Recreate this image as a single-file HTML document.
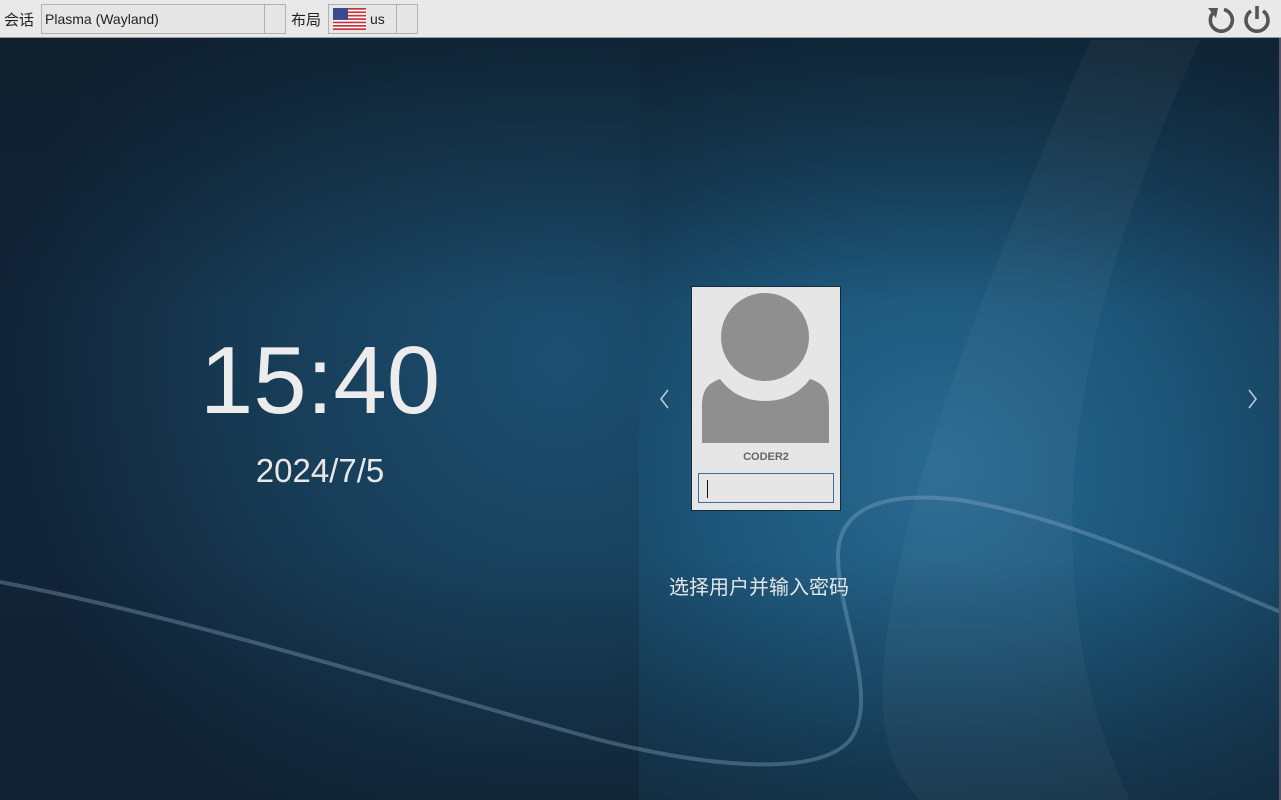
<!DOCTYPE html>
<html><head><meta charset="utf-8"><style>
*{margin:0;padding:0;box-sizing:border-box}
html,body{width:1281px;height:800px;overflow:hidden;background:#153049;font-family:"Liberation Sans","Noto Sans CJK SC",sans-serif}
.abs{position:absolute}
#bar{left:0;top:0;width:1281px;height:38px;background:#e9e9e9;border-bottom:1px solid #9a9a9a}
.lbl{font-size:15px;color:#222;top:9px}
.combo{top:4px;height:30px;border:1px solid #b2b2b2;background:#e6e6e6;font-size:14px;color:#222}
.div{position:absolute;top:0;bottom:0;width:1px;background:#b2b2b2}
</style></head><body>
<svg class="abs" style="left:0;top:38px" width="1281" height="762" viewBox="0 38 1281 762">
<defs>
<radialGradient id="rg" cx="940" cy="470" r="520" gradientUnits="userSpaceOnUse">
<stop offset="0" stop-color="#2a6a92"/><stop offset="0.45" stop-color="#1c5578"/><stop offset="1" stop-color="#14334c"/>
</radialGradient>
<radialGradient id="lg" cx="560" cy="360" r="560" gradientUnits="userSpaceOnUse">
<stop offset="0" stop-color="#1c5072"/><stop offset="0.55" stop-color="#173b55"/><stop offset="1" stop-color="#112336"/>
</radialGradient>
<linearGradient id="top" x1="0" y1="0" x2="0" y2="1">
<stop offset="0" stop-color="#0d1d2a" stop-opacity="0.7"/><stop offset="0.35" stop-color="#0d1d2a" stop-opacity="0"/>
</linearGradient>
<linearGradient id="botv" x1="0" y1="0" x2="0" y2="1">
<stop offset="0" stop-color="#0f1f2c" stop-opacity="0"/><stop offset="1" stop-color="#0f1f2c" stop-opacity="0.5"/>
</linearGradient>
</defs>
<rect x="0" y="38" width="1281" height="762" fill="url(#rg)"/>
<rect x="0" y="38" width="639" height="762" fill="url(#lg)"/>
<rect x="0" y="38" width="1281" height="762" fill="url(#top)"/>
<rect x="0" y="560" width="1281" height="240" fill="url(#botv)"/>
<path d="M1090 40 C1000 250 930 420 900 560 C870 700 880 760 920 800 L1130 800 C1080 700 1060 560 1080 420 C1100 280 1150 150 1200 40 Z" fill="#ffffff" opacity="0.035"/>
<path d="M0 582 C200 620 450 700 600 740 C720 770 820 775 850 740 C880 700 840 620 838 560 C836 510 880 490 960 500 C1080 520 1200 580 1281 612" fill="none" stroke="#8fb3cc" stroke-width="4" opacity="0.35"/>
<rect x="1279" y="38" width="2" height="762" fill="#556"/>
</svg>

<div id="bar" class="abs">
<div class="abs lbl" style="left:4px">会话</div>
<div class="abs combo" style="left:41px;width:245px"><span class="abs" style="left:3px;top:6px">Plasma (Wayland)</span><div class="div" style="left:222px"></div></div>
<div class="abs lbl" style="left:291px">布局</div>
<div class="abs combo" style="left:328px;width:90px">
<svg class="abs" style="left:4px;top:3px" width="33" height="22" viewBox="0 0 33 22">
<rect width="33" height="22" fill="#fff"/>
<g fill="#c8343c"><rect y="0" width="33" height="1.7"/><rect y="3.4" width="33" height="1.7"/><rect y="6.8" width="33" height="1.7"/><rect y="10.2" width="33" height="1.7"/><rect y="13.6" width="33" height="1.7"/><rect y="17" width="33" height="1.7"/><rect y="20.3" width="33" height="1.7"/></g>
<rect width="15" height="11.9" fill="#3b4a8c"/>
</svg>
<span class="abs" style="left:41px;top:6px">us</span><div class="div" style="left:67px"></div></div>
<svg class="abs" style="left:1205px;top:4px" width="30" height="30" viewBox="0 0 30 30"><path d="M9 8 A11 11 0 1 0 19 5.5" fill="none" stroke="#555" stroke-width="3.6"/><path d="M3 4 L13 4 L11 14 Z" fill="#555"/></svg>
<svg class="abs" style="left:1242px;top:4px" width="30" height="30" viewBox="0 0 30 30"><path d="M9 7 A11 11 0 1 0 21 7" fill="none" stroke="#555" stroke-width="3.6"/><rect x="13.2" y="2" width="3.6" height="13" fill="#555"/></svg>
</div>

<div class="abs" style="left:120px;top:326px;width:400px;text-align:center;color:#ececec;font-size:96px;line-height:110px">15:40</div>
<div class="abs" style="left:120px;top:451px;width:400px;text-align:center;color:#e8e8e8;font-size:33px;line-height:40px">2024/7/5</div>

<div class="abs" style="left:691px;top:286px;width:150px;height:225px;background:#e6e6e6;border:1px solid #152a3a">
<svg class="abs" style="left:0;top:0" width="148" height="160" viewBox="0 0 148 160">
<path d="M10 156 L10 120 C10 100 18 96 28 92 C40 108 56 114 73 114 C90 114 106 108 118 92 C130 96 137 102 137 120 L137 156 Z" fill="#8f8f8f"/>
<circle cx="73" cy="50" r="44" fill="#8f8f8f"/>
</svg>
<div class="abs" style="left:0;top:164px;width:148px;text-align:center;font-size:11px;font-weight:bold;color:#666">CODER2</div>
<div class="abs" style="left:6px;top:186px;width:136px;height:30px;border:1px solid #3d6d9c;background:#e6e6e6"><div class="abs" style="left:8px;top:6px;width:1px;height:18px;background:#111"></div></div>
</div>

<svg class="abs" style="left:658px;top:388px" width="14" height="22" viewBox="0 0 14 22"><path d="M10 2 L3 11 L10 20" fill="none" stroke="#b9c8d4" stroke-width="1.6"/></svg>
<svg class="abs" style="left:1245px;top:388px" width="14" height="22" viewBox="0 0 14 22"><path d="M4 2 L11 11 L4 20" fill="none" stroke="#b9c8d4" stroke-width="1.6"/></svg>

<div class="abs" style="left:669px;top:571px;font-size:20px;color:#e6e6e6;font-family:'Noto Sans CJK SC',sans-serif;white-space:nowrap">选择用户并输入密码</div>
</body></html>
